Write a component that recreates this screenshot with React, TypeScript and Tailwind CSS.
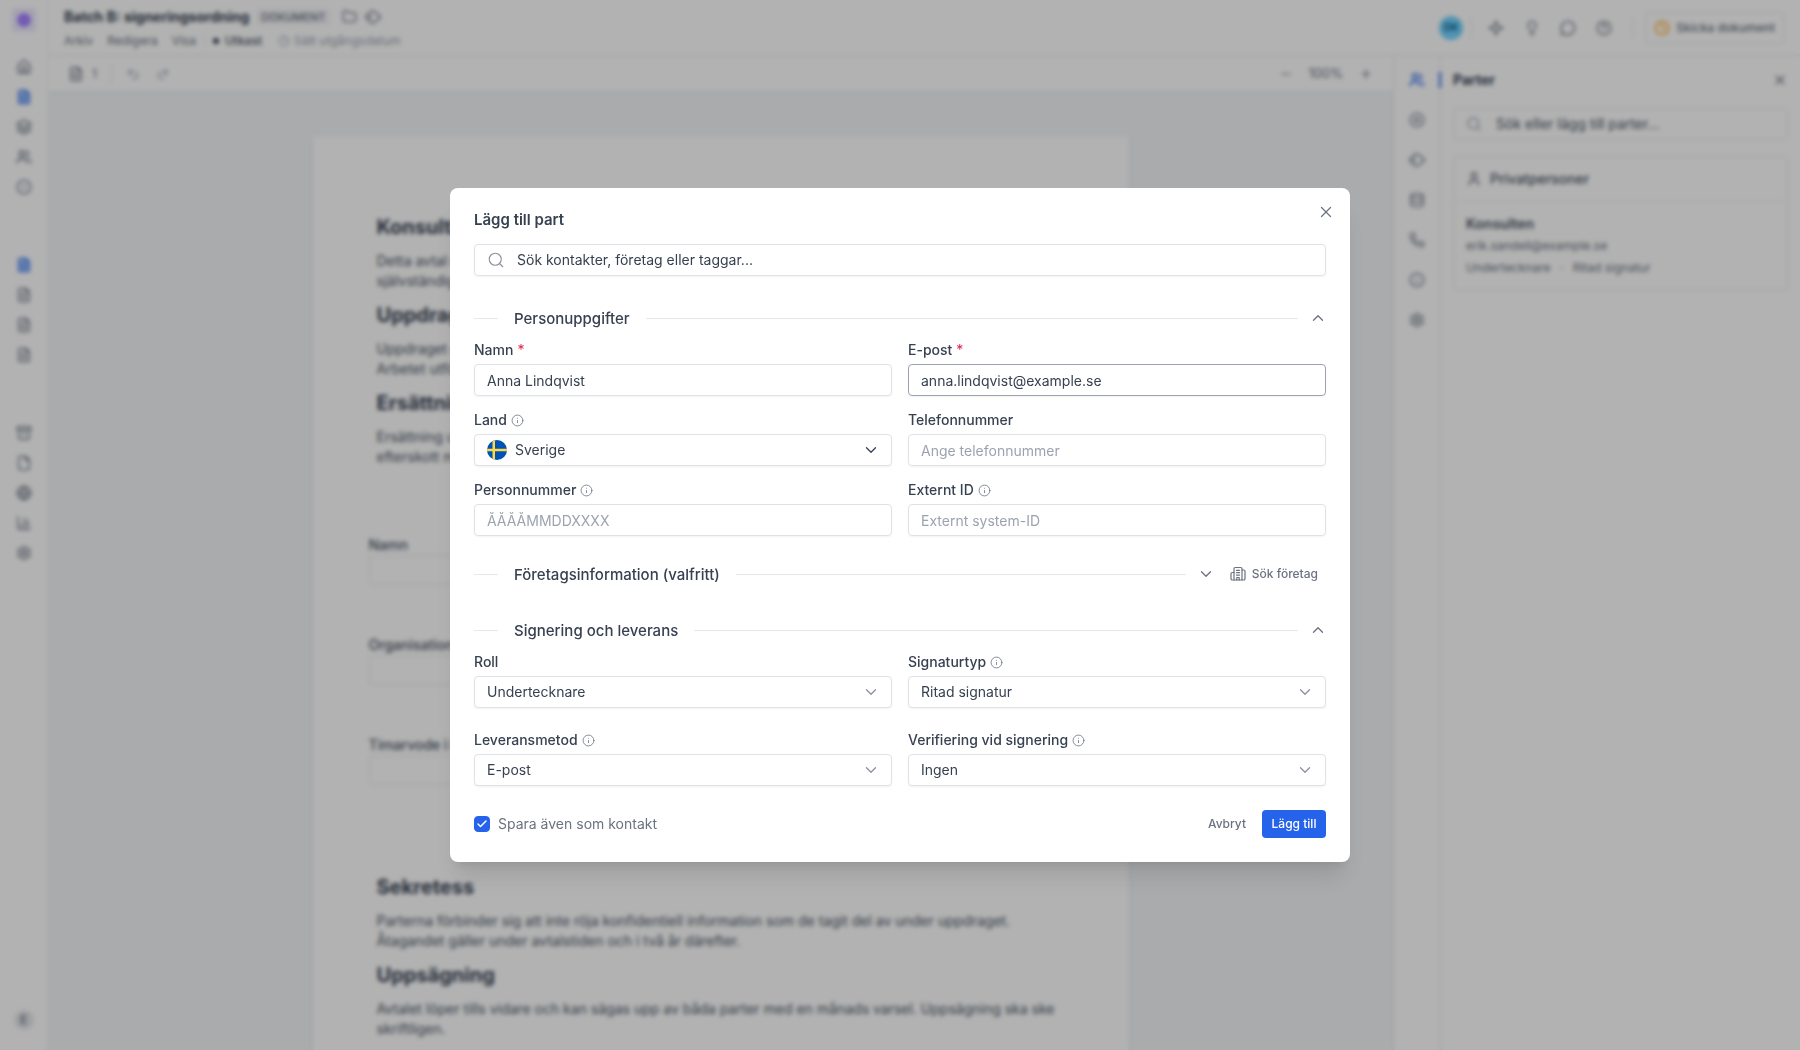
import { useState } from "react";
import type { ComponentType, ReactNode } from "react";
import {
  Archive,
  ChartColumn,
  Check,
  ChevronDown,
  ChevronUp,
  CircleDot,
  CircleHelp,
  CirclePlus,
  Clock,
  Database,
  File,
  FileText,
  Folder,
  Globe,
  House,
  Info,
  Layers,
  Lightbulb,
  MessageCircle,
  Minus,
  Phone,
  Plus,
  Redo2,
  Search,
  Settings,
  Sparkle,
  Undo2,
  User,
  Users,
  X,
} from "lucide-react";

type IconProps = { size?: number; strokeWidth?: number; className?: string };
type IconType = ComponentType<IconProps>;

function TagIcon({ size = 16, className }: IconProps) {
  return (
    <svg
      width={size}
      height={size}
      viewBox="0 0 16 16"
      fill="none"
      stroke="currentColor"
      strokeWidth="1.4"
      strokeLinejoin="round"
      className={className}
      aria-hidden="true"
    >
      <path d="M1 7.200 5.800 2.400Q7 1.300 8.500 2.200L14.500 6.600Q15.800 8 14.500 9.400L8.500 13.800Q7 14.700 5.800 13.600L1 8.800Q.400 8 1 7.200Z" />
      <circle cx="5" cy="8" r=".8" />
    </svg>
  );
}

const sidebarMain: IconType[] = [House, FileText, Layers, Users, CircleDot];
const sidebarRecent: IconType[] = [FileText, FileText, FileText, FileText];
const sidebarTools: IconType[] = [Archive, File, Globe, ChartColumn, Settings];
const panelTabs: IconType[] = [Users, CirclePlus, TagIcon, Database, Phone, Info, Settings];

function SidebarGroup({ icons, active }: { icons: IconType[]; active?: number }) {
  return (
    <div className="flex flex-col gap-3.5">
      {icons.map((Icon, index) => (
        <button
          key={index}
          type="button"
          aria-label={`Meny ${index + 1}`}
          className={index === active ? "text-[#2563eb]" : "text-gray-500"}
        >
          <Icon size={16} className={index === active ? "fill-blue-200" : ""} />
        </button>
      ))}
    </div>
  );
}

function Sidebar() {
  return (
    <nav className="flex w-12 shrink-0 flex-col items-center border-r border-gray-100 bg-white pt-2 pb-5">
      <div className="flex size-6 items-center justify-center rounded bg-violet-100">
        <div className="size-3.5 rounded-full bg-violet-400" />
      </div>
      <div className="mt-[27px] flex flex-col gap-[62px]">
        <SidebarGroup icons={sidebarMain} active={1} />
        <SidebarGroup icons={sidebarRecent} active={0} />
        <SidebarGroup icons={sidebarTools} />
      </div>
      <div className="mt-auto flex size-5 items-center justify-center rounded-full bg-gray-200 text-xs font-medium text-gray-500">
        E
      </div>
    </nav>
  );
}

function TopBar() {
  return (
    <header className="flex h-14 shrink-0 items-center justify-between border-b border-gray-200 bg-white px-4">
      <div className="flex flex-col gap-1.5">
        <div className="flex items-center">
          <h1 className="text-sm leading-5 font-bold text-gray-700">Batch B: signeringsordning</h1>
          <span className="ml-2 rounded bg-gray-100 px-1 text-[11px] leading-4 font-medium text-gray-500">
            DOKUMENT
          </span>
          <Folder size={15} className="ml-3 text-gray-500" />
          <TagIcon size={16} className="ml-2 text-gray-500" />
        </div>
        <div className="flex items-center text-xs text-gray-500">
          <button type="button">Arkiv</button>
          <button type="button" className="ml-3.5">Redigera</button>
          <button type="button" className="ml-3.5">Visa</button>
          <span className="mx-2 h-3 w-px bg-gray-200" />
          <span className="size-1.5 rounded-full bg-gray-700" />
          <span className="ml-1.5 font-medium text-gray-600">Utkast</span>
          <Clock size={12} className="ml-4 text-gray-400" />
          <button type="button" className="ml-1 text-gray-400">Sätt utgångsdatum</button>
        </div>
      </div>
      <div className="flex items-center text-gray-500">
        <span className="flex size-6 items-center justify-center rounded-full bg-sky-300 text-[10px] font-semibold text-sky-800">
          DK
        </span>
        <span className="mr-4 ml-2 h-5 w-px bg-gray-200" />
        <div className="flex items-center gap-5">
          <Sparkle size={16} />
          <Lightbulb size={16} />
          <MessageCircle size={16} />
          <CircleHelp size={16} />
        </div>
        <span className="mr-3 ml-5 h-5 w-px bg-gray-200" />
        <button
          type="button"
          className="flex h-8 items-center gap-1.5 rounded border border-gray-200 px-2 text-xs font-medium text-gray-500"
        >
          <Clock size={16} className="text-amber-500" />
          Skicka dokument
        </button>
      </div>
    </header>
  );
}

function Toolbar() {
  return (
    <div className="flex h-9 shrink-0 items-center justify-between border-b border-gray-200 bg-white px-5 text-gray-500">
      <div className="flex items-center">
        <FileText size={16} />
        <span className="ml-2 text-xs">1</span>
        <span className="mx-3.5 h-5 w-px bg-gray-200" />
        <Undo2 size={14} className="text-gray-400" />
        <Redo2 size={14} className="ml-4 text-gray-400" />
      </div>
      <div className="flex items-center gap-4">
        <Minus size={14} />
        <span className="text-[13px]">100%</span>
        <Plus size={14} />
      </div>
    </div>
  );
}

function Clause({ title, children }: { title: string; children: ReactNode }) {
  return (
    <section className="px-2">
      <h2 className="text-xl leading-7 font-bold text-gray-700">{title}</h2>
      <p className="mt-2.5 text-sm leading-5 text-gray-600">{children}</p>
    </section>
  );
}

function DocumentField({ id, label }: { id: string; label: string }) {
  return (
    <div className="flex flex-col">
      <label htmlFor={id} className="text-sm leading-5 font-medium text-gray-600">
        {label}
      </label>
      <input id={id} className="h-[30px] w-72 rounded border border-gray-200 bg-white" />
    </div>
  );
}

function DocumentPage() {
  return (
    <article className="mx-auto w-[816px] bg-white px-14 pt-[77px] pb-24 shadow-sm">
      <div className="flex flex-col gap-2.5">
        <Clause title="Konsultavtal">
          Detta avtal reglerar villkoren för konsultens uppdrag hos kunden som
          <br />
          självständig uppdragstagare.
        </Clause>
        <Clause title="Uppdraget">
          Uppdraget omfattar de tjänster som anges i bilagan till avtalet.
          <br />
          Arbetet utförs på plats eller på distans.
        </Clause>
        <Clause title="Ersättning">
          Ersättning utgår per arbetad timme och faktureras månadsvis i
          <br />
          efterskott med trettio dagars betalningsvillkor.
        </Clause>
      </div>
      <div className="mt-[68px] flex flex-col gap-[50px]">
        <DocumentField id="doc-name" label="Namn" />
        <DocumentField id="doc-org" label="Organisationsnummer" />
        <DocumentField id="doc-fee" label="Timarvode i kronor" />
      </div>
      <div className="mt-[88px] flex flex-col gap-2.5">
        <Clause title="Sekretess">
          Parterna förbinder sig att inte röja konfidentiell information som de tagit del av under
          uppdraget.
          <br />
          Åtagandet gäller under avtalstiden och i två år därefter.
        </Clause>
        <Clause title="Uppsägning">
          Avtalet löper tills vidare och kan sägas upp av båda parter med en månads varsel.
          Uppsägning ska ske
          <br />
          skriftligen.
        </Clause>
      </div>
    </article>
  );
}

function PartiesPanel() {
  return (
    <aside className="flex w-[407px] shrink-0 bg-white">
      <div className="flex w-12 shrink-0 flex-col items-center gap-6 border-x border-gray-200 pt-4 text-gray-500">
        {panelTabs.map((Icon, index) => (
          <button
            key={index}
            type="button"
            aria-label={`Panel ${index + 1}`}
            className={index === 0 ? "text-[#2563eb]" : ""}
          >
            <Icon size={16} />
          </button>
        ))}
      </div>
      <div className="mt-4 -ml-0.5 h-4 w-0.5 bg-[#2563eb]" />
      <div className="flex grow flex-col px-3 pt-3">
        <div className="flex items-center justify-between">
          <h2 className="text-sm leading-6 font-bold text-gray-700">Parter</h2>
          <X size={16} className="text-gray-500" />
        </div>
        <div className="mt-4 flex h-8 items-center gap-3.5 rounded border border-gray-200 pl-3">
          <Search size={16} className="text-gray-400" />
          <input
            aria-label="Sök eller lägg till parter"
            placeholder="Sök eller lägg till parter..."
            className="grow text-sm outline-none placeholder:text-gray-600"
          />
        </div>
        <div className="mt-4 rounded border border-gray-200">
          <div className="flex h-[45px] items-center gap-2 border-b border-gray-100 px-3">
            <User size={16} className="text-gray-500" />
            <h3 className="text-sm font-medium text-gray-600">Privatpersoner</h3>
          </div>
          <div className="flex flex-col gap-0.5 p-3">
            <p className="text-sm font-semibold text-gray-600">Konsulten</p>
            <p className="text-xs leading-5 text-gray-500">erik.sandell@example.se</p>
            <p className="text-xs leading-5 text-gray-500">
              Undertecknare <span className="mx-1.5">·</span> Ritad signatur
            </p>
          </div>
        </div>
      </div>
    </aside>
  );
}

function SwedishFlag() {
  return (
    <svg width="20" height="20" viewBox="0 0 20 20" aria-hidden="true">
      <clipPath id="flag-circle">
        <circle cx="10" cy="10" r="10" />
      </clipPath>
      <g clipPath="url(#flag-circle)">
        <rect width="20" height="20" fill="#0052b4" />
        <path d="M5.5 0h2.5v8.7h12v2.6H8V20H5.5v-8.7H0V8.7h5.5z" fill="#ffda44" />
      </g>
    </svg>
  );
}

function BuildingIcon() {
  return (
    <svg
      width="16"
      height="16"
      viewBox="0 0 16 16"
      fill="none"
      stroke="currentColor"
      strokeWidth="1.2"
      strokeLinecap="round"
      strokeLinejoin="round"
      aria-hidden="true"
    >
      <path d="M4 14V2.800A1.300 1.300 0 0 1 5.300 1.500h5.400A1.300 1.300 0 0 1 12 2.800V14" />
      <path d="M4 6.500H2.300A1.300 1.300 0 0 0 1 7.800v4.900A1.300 1.300 0 0 0 2.300 14h11.400a1.300 1.300 0 0 0 1.300-1.300V5.300A1.300 1.300 0 0 0 13.700 4H12" />
      <path d="M6.500 4.300h3M6.500 6.700h3M6.500 9.100h3M6.800 14v-2.500h2.400V14" />
    </svg>
  );
}

type SectionHeaderProps = {
  title: string;
  open: boolean;
  onToggle: () => void;
  children?: ReactNode;
};

function SectionHeader({ title, open, onToggle, children }: SectionHeaderProps) {
  const Chevron = open ? ChevronUp : ChevronDown;

  return (
    <div className="flex h-7 items-center">
      <span className="h-px w-6 bg-gray-200" />
      <h3 className="mx-4 pt-0.5 text-[15px] leading-6 font-medium text-[#374151]">{title}</h3>
      <span className="h-px grow bg-gray-200" />
      <button
        type="button"
        aria-label={title}
        aria-expanded={open}
        onClick={onToggle}
        className="ml-3 flex w-4 justify-center text-[#6b7280]"
      >
        <Chevron size={18} strokeWidth={1.75} className="shrink-0" />
      </button>
      {children}
    </div>
  );
}

type FieldProps = {
  id: string;
  label: string;
  required?: boolean;
  info?: boolean;
  children: ReactNode;
};

function Field({ id, label, required, info, children }: FieldProps) {
  return (
    <div className="flex flex-col gap-1">
      <label
        htmlFor={id}
        className="flex items-center gap-1 text-sm leading-5 font-medium text-[#374151]"
      >
        {label}
        {required && <span className="font-normal text-[#e11d48]">*</span>}
        {info && <Info size={13} strokeWidth={1.5} className="text-[#6b7280]" />}
      </label>
      {children}
    </div>
  );
}

type TextInputProps = {
  id: string;
  value?: string;
  placeholder?: string;
  active?: boolean;
};

function TextInput({ id, value, placeholder, active }: TextInputProps) {
  return (
    <input
      id={id}
      defaultValue={value}
      placeholder={placeholder}
      className={`h-8 w-full rounded border px-3 text-sm text-[#374151] shadow-xs outline-none placeholder:text-[#9ca3af] ${
        active ? "border-[#9ca3af]" : "border-[#dfe2e7]"
      }`}
    />
  );
}

type SelectInputProps = {
  id: string;
  options: string[];
  flag?: boolean;
};

function SelectInput({ id, options, flag }: SelectInputProps) {
  return (
    <div className="relative">
      {flag && (
        <span className="pointer-events-none absolute inset-y-0 left-[13px] flex items-center">
          <SwedishFlag />
        </span>
      )}
      <select
        id={id}
        className={`h-8 w-full appearance-none rounded border border-[#dfe2e7] bg-white pr-10 text-sm text-[#374151] shadow-xs outline-none ${
          flag ? "pl-10" : "pl-3"
        }`}
      >
        {options.map((option) => (
          <option key={option}>{option}</option>
        ))}
      </select>
      <span
        className={`pointer-events-none absolute inset-y-0 right-3 flex items-center ${
          flag ? "text-[#374151]" : "text-[#8b919d]"
        }`}
      >
        <ChevronDown size={18} strokeWidth={1.75} />
      </span>
    </div>
  );
}

function AddPartyDialog() {
  const [personOpen, setPersonOpen] = useState(true);
  const [companyOpen, setCompanyOpen] = useState(false);
  const [signingOpen, setSigningOpen] = useState(true);

  return (
    <div
      role="dialog"
      aria-modal="true"
      aria-labelledby="dialog-title"
      className="relative w-full max-w-[900px] rounded-lg bg-white p-6 shadow-xl"
    >
      <button
        type="button"
        aria-label="Stäng"
        className="absolute top-3.5 right-3.5 flex size-5 items-center justify-center text-[#6b7280]"
      >
        <X size={18} strokeWidth={1.75} />
      </button>
      <h2 id="dialog-title" className="text-[15px] leading-4 font-semibold text-[#374151]">
        Lägg till part
      </h2>
      <div className="mt-4 flex h-8 items-center gap-3 rounded border border-[#dfe2e7] pl-3 shadow-xs">
        <Search size={18} strokeWidth={1.5} className="text-[#8b919d]" />
        <input
          aria-label="Sök kontakter, företag eller taggar"
          placeholder="Sök kontakter, företag eller taggar..."
          className="grow text-sm outline-none placeholder:text-[#374151]"
        />
      </div>

      <div className="mt-7">
        <SectionHeader
          title="Personuppgifter"
          open={personOpen}
          onToggle={() => setPersonOpen(!personOpen)}
        />
      </div>
      {personOpen && (
        <div className="mt-2 grid grid-cols-2 gap-x-4 gap-y-3.5">
          <Field id="name" label="Namn" required>
            <TextInput id="name" value="Anna Lindqvist" />
          </Field>
          <Field id="email" label="E-post" required>
            <TextInput id="email" value="anna.lindqvist@example.se" active />
          </Field>
          <Field id="country" label="Land" info>
            <SelectInput id="country" options={["Sverige"]} flag />
          </Field>
          <Field id="phone" label="Telefonnummer">
            <TextInput id="phone" placeholder="Ange telefonnummer" />
          </Field>
          <Field id="ssn" label="Personnummer" info>
            <TextInput id="ssn" placeholder="ÅÅÅÅMMDDXXXX" />
          </Field>
          <Field id="external-id" label="Externt ID" info>
            <TextInput id="external-id" placeholder="Externt system-ID" />
          </Field>
        </div>
      )}

      <div className="mt-6">
        <SectionHeader
          title="Företagsinformation (valfritt)"
          open={companyOpen}
          onToggle={() => setCompanyOpen(!companyOpen)}
        >
          <button
            type="button"
            className="ml-2 flex items-center gap-1.5 px-2 text-xs font-medium text-[#6b7280]"
          >
            <BuildingIcon />
            Sök företag
          </button>
        </SectionHeader>
      </div>

      <div className="mt-7">
        <SectionHeader
          title="Signering och leverans"
          open={signingOpen}
          onToggle={() => setSigningOpen(!signingOpen)}
        />
      </div>
      {signingOpen && (
        <div className="mt-2 grid grid-cols-2 gap-x-4 gap-y-[22px]">
          <Field id="role" label="Roll">
            <SelectInput id="role" options={["Undertecknare"]} />
          </Field>
          <Field id="signature" label="Signaturtyp" info>
            <SelectInput id="signature" options={["Ritad signatur"]} />
          </Field>
          <Field id="delivery" label="Leveransmetod" info>
            <SelectInput id="delivery" options={["E-post"]} />
          </Field>
          <Field id="verification" label="Verifiering vid signering" info>
            <SelectInput id="verification" options={["Ingen"]} />
          </Field>
        </div>
      )}

      <div className="mt-6 flex items-center justify-between">
        <label className="flex items-center gap-2 text-sm text-[#6b7280]">
          <span className="relative flex size-4">
            <input
              type="checkbox"
              defaultChecked
              className="peer size-4 appearance-none rounded border border-gray-300 checked:border-[#2563eb] checked:bg-[#2563eb]"
            />
            <Check
              size={12}
              strokeWidth={3}
              className="pointer-events-none absolute inset-0.5 hidden text-white peer-checked:block"
            />
          </span>
          Spara även som kontakt
        </label>
        <div className="flex items-center gap-2">
          <button type="button" className="h-7 px-2 text-xs font-medium text-[#6b7280]">
            Avbryt
          </button>
          <button
            type="button"
            className="h-7 w-16 rounded bg-[#2563eb] text-xs font-medium text-white"
          >
            Lägg till
          </button>
        </div>
      </div>
    </div>
  );
}

export default function App() {
  return (
    <div className="flex h-screen overflow-hidden bg-white font-['Inter',sans-serif]">
      <Sidebar />
      <div className="flex min-w-0 grow flex-col">
        <TopBar />
        <div className="flex min-h-0 grow">
          <main className="flex min-w-0 grow flex-col bg-[#f3f5f8]">
            <Toolbar />
            <div className="min-h-0 grow overflow-hidden pt-11">
              <DocumentPage />
            </div>
          </main>
          <PartiesPanel />
        </div>
      </div>
      <div className="fixed inset-0 flex items-center justify-center bg-black/30 backdrop-blur-[2px]">
        <AddPartyDialog />
      </div>
    </div>
  );
}
